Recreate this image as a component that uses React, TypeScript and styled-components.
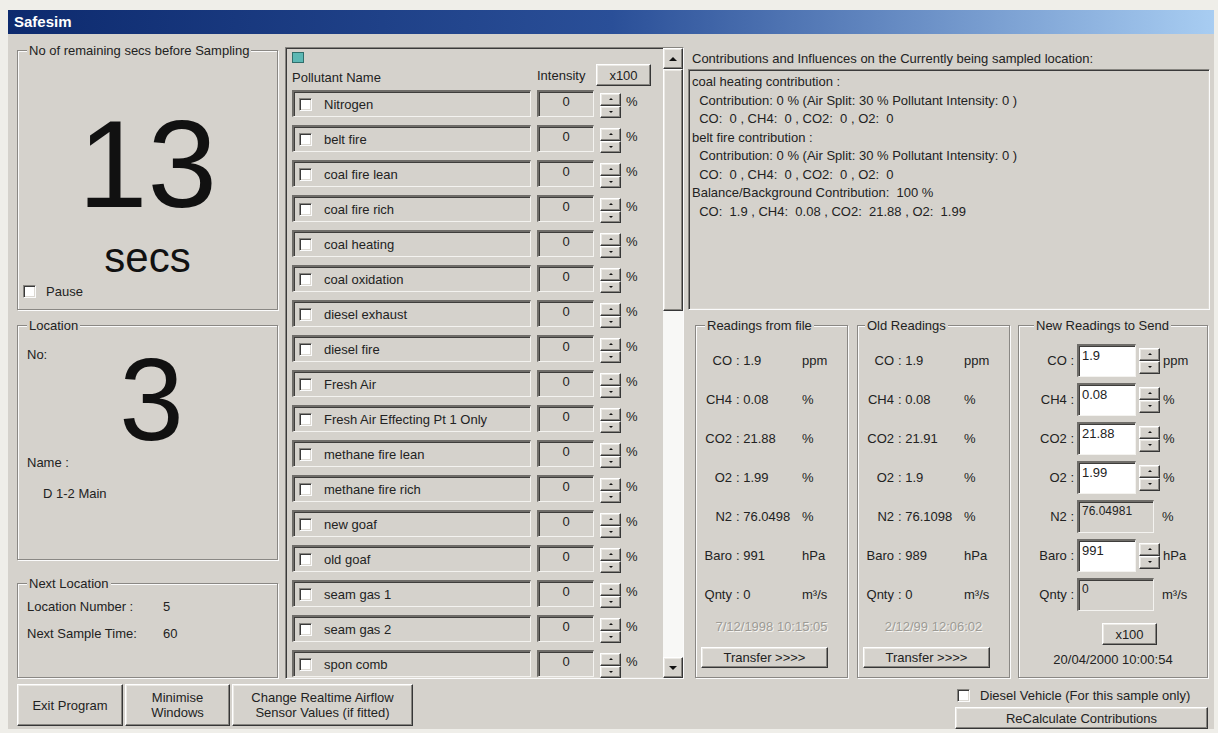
import React from "react";
import styled, { createGlobalStyle, css } from "styled-components";

const pollutants = [
  "Nitrogen",
  "belt fire",
  "coal fire lean",
  "coal fire rich",
  "coal heating",
  "coal oxidation",
  "diesel exhaust",
  "diesel fire",
  "Fresh Air",
  "Fresh Air Effecting Pt 1 Only",
  "methane fire lean",
  "methane fire rich",
  "new goaf",
  "old goaf",
  "seam gas 1",
  "seam gas 2",
  "spon comb",
];

const contributionLines = [
  "coal heating contribution :",
  "  Contribution: 0 % (Air Split: 30 % Pollutant Intensity: 0 )",
  "  CO:  0 , CH4:  0 , CO2:  0 , O2:  0",
  "belt fire contribution :",
  "  Contribution: 0 % (Air Split: 30 % Pollutant Intensity: 0 )",
  "  CO:  0 , CH4:  0 , CO2:  0 , O2:  0",
  "Balance/Background Contribution:  100 %",
  "  CO:  1.9 , CH4:  0.08 , CO2:  21.88 , O2:  1.99",
];

type Reading = { name: string; value: string; unit: string };

const fileReadings: Reading[] = [
  { name: "CO", value: "1.9", unit: "ppm" },
  { name: "CH4", value: "0.08", unit: "%" },
  { name: "CO2", value: "21.88", unit: "%" },
  { name: "O2", value: "1.99", unit: "%" },
  { name: "N2", value: "76.0498", unit: "%" },
  { name: "Baro", value: "991", unit: "hPa" },
  { name: "Qnty", value: "0", unit: "m³/s" },
];

const oldReadings: Reading[] = [
  { name: "CO", value: "1.9", unit: "ppm" },
  { name: "CH4", value: "0.08", unit: "%" },
  { name: "CO2", value: "21.91", unit: "%" },
  { name: "O2", value: "1.9", unit: "%" },
  { name: "N2", value: "76.1098", unit: "%" },
  { name: "Baro", value: "989", unit: "hPa" },
  { name: "Qnty", value: "0", unit: "m³/s" },
];

// editable rows have a spinner, computed ones are a grey read-only box
type NewReading = Reading & { editable: boolean };

const newReadings: NewReading[] = [
  { name: "CO", value: "1.9", unit: "ppm", editable: true },
  { name: "CH4", value: "0.08", unit: "%", editable: true },
  { name: "CO2", value: "21.88", unit: "%", editable: true },
  { name: "O2", value: "1.99", unit: "%", editable: true },
  { name: "N2", value: "76.04981", unit: "%", editable: false },
  { name: "Baro", value: "991", unit: "hPa", editable: true },
  { name: "Qnty", value: "0", unit: "m³/s", editable: false },
];

const GlobalStyle = createGlobalStyle`
  *, *::before, *::after { box-sizing: border-box; }
  html, body {
    margin: 0;
    padding: 0;
    background: #efeee9;
  }
  body {
    font-family: "Liberation Sans", Arial, sans-serif;
    font-size: 13px;
    color: #222;
  }
`;

const FACE = "#d5d2cc";

const raised = css`
  background: ${FACE};
  border-top: 1px solid #ffffff;
  border-left: 1px solid #ffffff;
  border-right: 1px solid #363636;
  border-bottom: 1px solid #363636;
  box-shadow: inset -1px -1px 0 #878580, inset 1px 1px 0 #ebe9e4;
`;

const sunken = css`
  border-top: 1px solid #878580;
  border-left: 1px solid #878580;
  border-right: 1px solid #fbfbfb;
  border-bottom: 1px solid #fbfbfb;
  box-shadow: inset 1px 1px 0 #3a3a3a, inset -1px -1px 0 #dcd9d3;
`;

const Window = styled.div`
  width: 1206px;
  height: 719px;
  margin: 10px 0 0 8px;
  background: ${FACE};
  display: flex;
  flex-direction: column;
`;

const TitleBar = styled.div`
  height: 24px;
  flex-shrink: 0;
  padding-left: 6px;
  background: linear-gradient(to right, #0d2a6e 0%, #2a4f98 50%, #a8cdf2 100%);
  color: #fff;
  font-weight: bold;
  font-size: 15px;
  line-height: 24px;
`;

const Content = styled.div`
  height: 645px;
  display: flex;
  padding: 0 4px 0 9px;
`;

const LeftCol = styled.div`
  width: 261px;
  flex-shrink: 0;
  display: flex;
  flex-direction: column;
  padding-top: 16px;
`;

const Group = styled.div<{ $h: number; $mt?: number; $ml?: number; $w?: number }>`
  height: ${(p) => p.$h}px;
  width: ${(p) => (p.$w ? `${p.$w}px` : "auto")};
  margin: ${(p) => p.$mt ?? 0}px 0 0 ${(p) => p.$ml ?? 0}px;
  flex-shrink: 0;
  border: 1px solid #8a8884;
  box-shadow: 1px 1px 0 #fbfbfb, inset 1px 1px 0 #fbfbfb;
  display: flex;
  flex-direction: column;
`;

const GroupTitle = styled.div<{ $ml?: number }>`
  align-self: flex-start;
  margin: -8px 0 0 ${(p) => p.$ml ?? 9}px;
  padding: 0 2px;
  background: ${FACE};
  line-height: 15px;
  white-space: nowrap;
`;

const Countdown = styled.div`
  margin-top: 36px;
  text-align: center;
  font-size: 125px;
  line-height: 140px;
  color: #111;
`;

const Secs = styled.div`
  text-align: center;
  font-size: 42px;
  line-height: 47px;
  color: #111;
`;

const CheckRow = styled.label<{ $ml?: number; $mt?: number }>`
  display: flex;
  align-items: center;
  gap: 10px;
  height: 15px;
  margin: ${(p) => p.$mt ?? 0}px 0 0 ${(p) => p.$ml ?? 0}px;
  white-space: nowrap;
`;

const Check = styled.span`
  width: 13px;
  height: 13px;
  flex-shrink: 0;
  background: #fff;
  ${sunken};
`;

const LocationStack = styled.div`
  display: grid;
  margin-top: 13px;
  & > * {
    grid-area: 1 / 1;
  }
`;

const SmallLabel = styled.div`
  justify-self: start;
  margin: 1px 0 0 9px;
  line-height: 15px;
`;

const LocationNumber = styled.div`
  justify-self: center;
  padding-left: 8px;
  font-size: 116px;
  line-height: 108px;
  color: #111;
`;

const PlainLabel = styled.div<{ $ml?: number; $mt?: number }>`
  margin: ${(p) => p.$mt ?? 0}px 0 0 ${(p) => p.$ml ?? 0}px;
  line-height: 15px;
`;

const InfoGrid = styled.div`
  display: grid;
  grid-template-columns: 136px auto;
  row-gap: 12px;
  margin: 8px 0 0 9px;
  line-height: 15px;
`;

const ListPanel = styled.div`
  width: 399px;
  height: 632px;
  margin: 13px 0 0 7px;
  flex-shrink: 0;
  display: flex;
  ${sunken};
`;

const ListBody = styled.div`
  flex: 1;
  min-width: 0;
  padding: 4px 0 0 6px;
  overflow: hidden;
`;

const TealMark = styled.div`
  width: 12px;
  height: 11px;
  background: #5cb8b4;
  border: 1px solid #2f6e6b;
`;

const ListHeader = styled.div`
  height: 23px;
  display: flex;
  align-items: flex-end;
`;

const HeaderName = styled.div`
  width: 245px;
  line-height: 15px;
  padding-bottom: 1px;
`;

const HeaderIntensity = styled.div`
  width: 59px;
  line-height: 15px;
  padding-bottom: 3px;
  align-self: center;
  margin-top: 4px;
`;

const Rows = styled.div`
  margin-top: 4px;
  display: flex;
  flex-direction: column;
  gap: 8px;
`;

const PollutantRow = styled.div`
  height: 27px;
  flex-shrink: 0;
  display: flex;
  align-items: flex-start;
`;

const inset3d = css`
  border-top: 2px solid #6f6d69;
  border-left: 2px solid #6f6d69;
  border-right: 1px solid #f4f3f0;
  border-bottom: 1px solid #f4f3f0;
  box-shadow: inset 1px 1px 0 #3e3d3b;
`;

const NameBox = styled.div`
  width: 239px;
  height: 27px;
  display: flex;
  align-items: center;
  gap: 12px;
  padding-left: 5px;
  white-space: nowrap;
  ${inset3d};
`;

const IntensityBox = styled.div`
  width: 57px;
  height: 27px;
  margin-left: 6px;
  text-align: center;
  line-height: 20px;
  ${inset3d};
`;

const Percent = styled.span`
  margin-left: 5px;
  padding-top: 4px;
  line-height: 15px;
`;

const SpinWrap = styled.div<{ $h: number; $mt?: number; $ml?: number }>`
  width: 21px;
  height: ${(p) => p.$h}px;
  margin: ${(p) => p.$mt ?? 0}px 0 0 ${(p) => p.$ml ?? 0}px;
  flex-shrink: 0;
  display: flex;
  flex-direction: column;
`;

const SpinHalf = styled.div<{ $down?: boolean }>`
  flex: 1;
  display: flex;
  align-items: center;
  justify-content: center;
  ${raised};
  &::after {
    content: "";
    border-left: 2px solid transparent;
    border-right: 2px solid transparent;
    ${(p) =>
      p.$down ? "border-top: 2px solid #111;" : "border-bottom: 2px solid #111;"}
  }
`;

function Spinner({ h, mt, ml }: { h: number; mt?: number; ml?: number }) {
  return (
    <SpinWrap $h={h} $mt={mt} $ml={ml}>
      <SpinHalf />
      <SpinHalf $down />
    </SpinWrap>
  );
}

const ScrollBar = styled.div`
  width: 20px;
  flex-shrink: 0;
  display: flex;
  flex-direction: column;
`;

const ScrollButton = styled.div<{ $down?: boolean }>`
  height: 21px;
  flex-shrink: 0;
  display: flex;
  align-items: center;
  justify-content: center;
  ${raised};
  &::after {
    content: "";
    border-left: 4px solid transparent;
    border-right: 4px solid transparent;
    ${(p) =>
      p.$down ? "border-top: 4px solid #111;" : "border-bottom: 4px solid #111;"}
  }
`;

const ScrollThumb = styled.div`
  height: 242px;
  flex-shrink: 0;
  ${raised};
`;

const ScrollTrack = styled.div`
  flex: 1;
  background: #f8f8f6;
`;

const Button = styled.div<{ $w: number; $h: number }>`
  width: ${(p) => p.$w}px;
  height: ${(p) => p.$h}px;
  flex-shrink: 0;
  display: flex;
  align-items: center;
  justify-content: center;
  text-align: center;
  line-height: 15px;
  white-space: nowrap;
  ${raised};
`;

const RightCol = styled.div`
  width: 522px;
  flex-shrink: 0;
  margin-left: 4px;
  display: flex;
  flex-direction: column;
  padding-top: 17px;
`;

const Caption = styled.div`
  padding-left: 4px;
  line-height: 15px;
  white-space: nowrap;
`;

const ContribBox = styled.div`
  height: 241px;
  margin-top: 3px;
  padding: 3px 3px;
  white-space: pre;
  line-height: 18.5px;
  ${sunken};
`;

const ReadingsRow = styled.div`
  display: flex;
  margin-top: 15px;
  padding-left: 7px;
`;

const ReadingGrid = styled.div`
  display: grid;
  grid-template-columns: 36px 70px auto;
  grid-auto-rows: 39px;
  align-items: center;
  margin-top: 8px;
  line-height: 15px;
  white-space: nowrap;
`;

const ReadingName = styled.span`
  text-align: right;
`;

const ReadingValue = styled.span`
  padding-left: 4px;
`;

const DimDate = styled.div`
  margin-top: 3px;
  text-align: center;
  line-height: 20px;
  color: #9d9b95;
  text-shadow: 1px 1px 0 #f6f5f2;
`;

const TransferButton = styled(Button)`
  margin: 10px 0 0 5px;
`;

const NewRow = styled.div`
  height: 39px;
  display: flex;
  align-items: center;
  white-space: nowrap;
`;

const NewLabel = styled.span`
  width: 55px;
  text-align: right;
  flex-shrink: 0;
`;

const Field = styled.div<{ $editable: boolean }>`
  width: ${(p) => (p.$editable ? 59 : 77)}px;
  height: 33px;
  margin-left: 3px;
  padding: 2px 3px;
  line-height: 15px;
  background: ${(p) => (p.$editable ? "#ffffff" : FACE)};
  font-size: ${(p) => (p.$editable ? 13 : 12)}px;
  ${inset3d};
`;

const Unit = styled.span<{ $ml: number }>`
  margin-left: ${(p) => p.$ml}px;
`;

const NewRows = styled.div`
  margin-top: 8px;
`;

const NewX100 = styled(Button)`
  margin: 9px 0 0 83px;
`;

const NewDate = styled.div`
  margin-top: 7px;
  text-align: center;
  line-height: 16px;
`;

const Footer = styled.div`
  height: 50px;
  display: flex;
  justify-content: space-between;
  padding: 5px 6px 0 9px;
`;

const FooterButtons = styled.div`
  display: flex;
  gap: 2px;
`;

const FooterRight = styled.div`
  width: 253px;
  display: flex;
  flex-direction: column;
`;

const RecalcButton = styled(Button)`
  margin-top: 4px;
`;

function ReadingsGroup({
  title,
  titleOffset,
  ml,
  readings,
  stamp,
}: {
  title: string;
  titleOffset: number;
  ml?: number;
  readings: Reading[];
  stamp: string;
}) {
  return (
    <Group $w={153} $h={353} $ml={ml}>
      <GroupTitle $ml={titleOffset}>{title}</GroupTitle>
      <ReadingGrid>
        {readings.map((r) => (
          <React.Fragment key={r.name}>
            <ReadingName>{r.name}</ReadingName>
            <ReadingValue>: {r.value}</ReadingValue>
            <span>{r.unit}</span>
          </React.Fragment>
        ))}
      </ReadingGrid>
      <DimDate>{stamp}</DimDate>
      <TransferButton $w={127} $h={21}>
        Transfer &gt;&gt;&gt;&gt;
      </TransferButton>
    </Group>
  );
}

export default function App() {
  return (
    <>
      <GlobalStyle />
      <Window>
        <TitleBar>Safesim</TitleBar>
        <Content>
          <LeftCol>
            <Group $h={260}>
              <GroupTitle>No of remaining secs before Sampling</GroupTitle>
              <Countdown>13</Countdown>
              <Secs>secs</Secs>
              <CheckRow $ml={5} $mt={3}>
                <Check />
                <span>Pause</span>
              </CheckRow>
            </Group>

            <Group $h={235} $mt={15}>
              <GroupTitle>Location</GroupTitle>
              <LocationStack>
                <SmallLabel>No:</SmallLabel>
                <LocationNumber>3</LocationNumber>
              </LocationStack>
              <PlainLabel $ml={9} $mt={1}>
                Name :
              </PlainLabel>
              <PlainLabel $ml={25} $mt={16}>
                D 1-2 Main
              </PlainLabel>
            </Group>

            <Group $h={95} $mt={23}>
              <GroupTitle>Next Location</GroupTitle>
              <InfoGrid>
                <span>Location Number :</span>
                <span>5</span>
                <span>Next Sample Time:</span>
                <span>60</span>
              </InfoGrid>
            </Group>
          </LeftCol>

          <ListPanel>
            <ListBody>
              <TealMark />
              <ListHeader>
                <HeaderName>Pollutant Name</HeaderName>
                <HeaderIntensity>Intensity</HeaderIntensity>
                <Button $w={55} $h={22}>
                  x100
                </Button>
              </ListHeader>
              <Rows>
                {pollutants.map((p) => (
                  <PollutantRow key={p}>
                    <NameBox>
                      <Check />
                      <span>{p}</span>
                    </NameBox>
                    <IntensityBox>0</IntensityBox>
                    <Spinner h={25} mt={3} ml={6} />
                    <Percent>%</Percent>
                  </PollutantRow>
                ))}
              </Rows>
            </ListBody>
            <ScrollBar>
              <ScrollButton />
              <ScrollThumb />
              <ScrollTrack />
              <ScrollButton $down />
            </ScrollBar>
          </ListPanel>

          <RightCol>
            <Caption>
              Contributions and Influences on the Currently being sampled location:
            </Caption>
            <ContribBox>{contributionLines.join("\n")}</ContribBox>
            <ReadingsRow>
              <ReadingsGroup
                title="Readings from file"
                titleOffset={9}
                readings={fileReadings}
                stamp="7/12/1998 10:15:05"
              />
              <ReadingsGroup
                title="Old Readings"
                titleOffset={7}
                ml={9}
                readings={oldReadings}
                stamp="2/12/99 12:06:02"
              />
              <Group $w={190} $h={353} $ml={8}>
                <GroupTitle $ml={15}>New Readings to Send</GroupTitle>
                <NewRows>
                  {newReadings.map((r) => (
                    <NewRow key={r.name}>
                      <NewLabel>{r.name} :</NewLabel>
                      <Field $editable={r.editable}>{r.value}</Field>
                      {r.editable && <Spinner h={26} ml={3} />}
                      <Unit $ml={r.editable ? 3 : 8}>{r.unit}</Unit>
                    </NewRow>
                  ))}
                </NewRows>
                <NewX100 $w={55} $h={22}>
                  x100
                </NewX100>
                <NewDate>20/04/2000 10:00:54</NewDate>
              </Group>
            </ReadingsRow>
          </RightCol>
        </Content>

        <Footer>
          <FooterButtons>
            <Button $w={106} $h={42}>
              Exit Program
            </Button>
            <Button $w={105} $h={42}>
              Minimise
              <br />
              Windows
            </Button>
            <Button $w={181} $h={42}>
              Change Realtime Airflow
              <br />
              Sensor Values (if fitted)
            </Button>
          </FooterButtons>
          <FooterRight>
            <CheckRow $ml={2} $mt={4}>
              <Check />
              <span>Diesel Vehicle (For this sample only)</span>
            </CheckRow>
            <RecalcButton $w={253} $h={22}>
              ReCalculate Contributions
            </RecalcButton>
          </FooterRight>
        </Footer>
      </Window>
    </>
  );
}
